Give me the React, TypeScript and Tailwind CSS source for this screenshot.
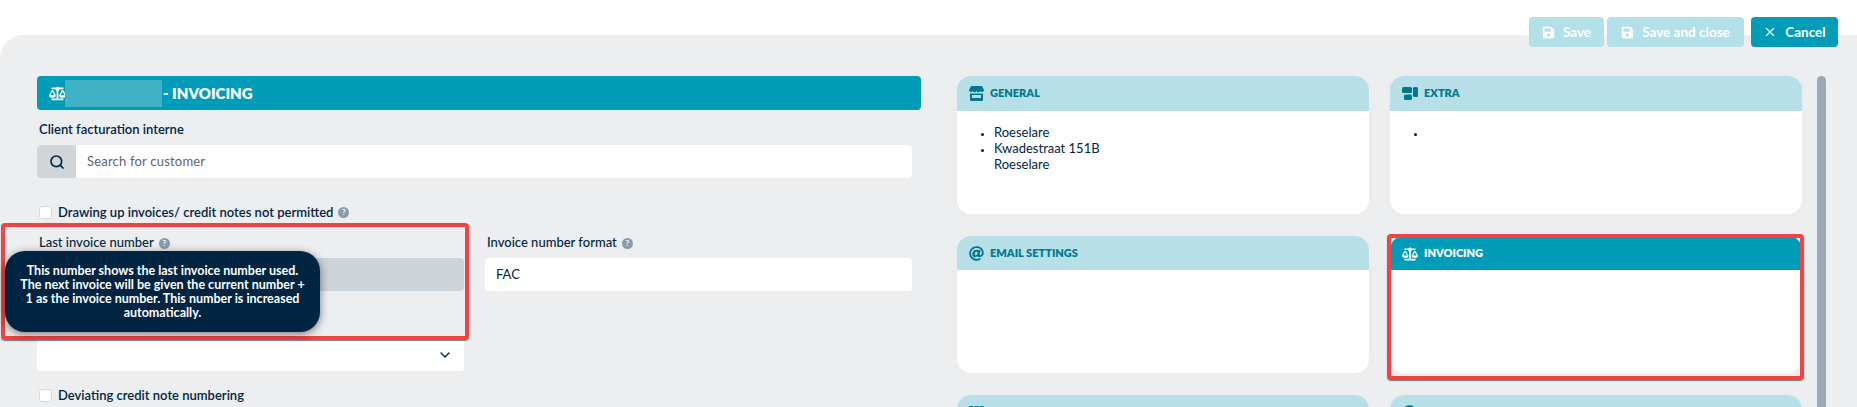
import React from 'react';
import { FaAt, FaBalanceScale, FaQuestionCircle, FaSave, FaTh } from 'react-icons/fa';
import { FiChevronDown, FiSearch, FiX } from 'react-icons/fi';

const font = 'font-["Lato","Liberation_Sans",sans-serif]';

const StoreIcon = () => (
    <svg width="15" height="15" viewBox="0 0 15 15" fill="currentColor">
        <path d="M2 0h11l2 4a2 2 0 0 1-3.750 1 2 2 0 0 1-3.750 0 2 2 0 0 1-3.750 0A2 2 0 0 1 0 4z" />
        <path d="M1 7.500h13V14a1 1 0 0 1-1 1H2a1 1 0 0 1-1-1zM3 9v3h9V9z" fillRule="evenodd" />
    </svg>
);

const BlocksIcon = () => (
    <svg width="16" height="13" viewBox="0 0 16 13" fill="currentColor">
        <rect x="0" y="0" width="10" height="6" rx="1.5" />
        <rect x="11" y="0" width="5" height="10" rx="1.5" />
        <rect x="2" y="7.500" width="8" height="5.500" rx="1.5" />
    </svg>
);

const HelpDot = () => (
    <span className="ml-[5px] inline-flex h-[11px] w-[11px] items-center justify-center rounded-full bg-[#8a9aa8] text-[8px] font-bold leading-none text-white">?</span>
);

const Checkbox = () => (
    <span className="h-[13px] w-[13px] shrink-0 rounded-[3px] border border-[#d5d8dc] bg-white" />
);

const Card = ({ title, icon, active, heightClass, headClass, children }: {
    title: string;
    icon: React.ReactNode;
    active?: boolean;
    heightClass: string;
    headClass: string;
    children?: React.ReactNode;
}) => (
    <div className={`flex flex-col overflow-hidden rounded-[14px] bg-white shadow-[0_0_14px_rgba(0,0,0,0.02)] ${heightClass}`}>
        <div className={`flex shrink-0 items-center gap-[6px] pl-3 text-[11px] font-extrabold uppercase ${headClass} ${active ? 'bg-[#019db8] text-white' : 'bg-[#b7dfe7] text-[#01788f]'}`}>
            {icon}
            <span>{title}</span>
        </div>
        {children}
    </div>
);

const ActionButton = ({ label, icon, enabled, widthClass }: { label: string; icon: React.ReactNode; enabled?: boolean; widthClass: string }) => (
    <button className={`flex h-[30px] items-center justify-center gap-[8px] rounded-[4px] text-[13.500px] font-bold text-white ${widthClass} ${enabled ? 'bg-[#019db8]' : 'bg-[#b2e1e9]'}`}>
        {icon}
        {label}
    </button>
);

const App: React.FC = () => {
    return (
        <div className={`flex h-[407px] w-[1857px] flex-col overflow-hidden bg-white text-[#002542] ${font}`}>
            {/* Toolbar hangs over the top of the grey panel */}
            <div className="relative z-10 flex h-[35px] shrink-0 items-start justify-end gap-[3px] pr-[19px] pt-[17px]">
                <ActionButton label="Save" icon={<FaSave size={13} />} widthClass="w-[75px]" />
                <ActionButton label="Save and close" icon={<FaSave size={13} />} widthClass="w-[137px]" />
                <span className="w-px" />
                <ActionButton label="Cancel" icon={<FiX size={14} />} enabled widthClass="w-[87px]" />
            </div>

            <div className="relative flex min-h-0 flex-1 rounded-tl-[24px] bg-[#edeef0] pl-[37px] pt-[41px]">
                {/* Left form */}
                <div className="w-[884px] shrink-0">
                    <div className="flex h-[34px] items-center rounded-[4px] bg-[#019db8] pl-3 text-[15px] font-extrabold text-white">
                        <FaBalanceScale size={17} className="shrink-0" />
                        <span className="ml-[-1px] mr-[1px] h-[27px] w-[97px] bg-[#40b2c6]" />
                        <span>- INVOICING</span>
                    </div>

                    <div className="w-[875px]">
                        <div className="mt-[11px] pl-[2px] text-[13px] font-semibold leading-[16px]">Client facturation interne</div>
                        <div className="mt-[8px] flex h-[33px] overflow-hidden rounded-[4px] bg-white">
                            <span className="flex w-[39px] items-center justify-center bg-[#d0d5d9]"><FiSearch size={16} strokeWidth={2.500} /></span>
                            <span className="flex items-center pl-[11px] text-[13px] tracking-[0.2px] text-[#5c6470]">Search for customer</span>
                        </div>

                        <div className="mt-[27px] flex items-center gap-[6px] pl-[2px] text-[13px] font-semibold leading-[14px]">
                            <Checkbox />
                            <span className="flex items-center">Drawing up invoices/ credit notes not permitted<HelpDot /></span>
                        </div>

                        <div className="mt-[16px] grid grid-cols-[427px_427px] gap-x-[21px]">
                            <div>
                                <div className="flex h-[16px] items-center pl-[2px] text-[13px] font-medium">Last invoice number<HelpDot /></div>
                                <div className="mt-[7px] h-[33px] rounded-[4px] bg-[#ccd3d9]" />
                                <div className="mt-[47px] flex h-[33px] items-center justify-end rounded-[4px] bg-white pr-[11px]"><FiChevronDown size={16} /></div>
                            </div>
                            <div>
                                <div className="flex h-[16px] items-center pl-[2px] text-[13px] font-medium">Invoice number format<HelpDot /></div>
                                <div className="mt-[7px] flex h-[33px] items-center rounded-[4px] bg-white pl-[11px] text-[13px]">FAC</div>
                            </div>
                        </div>

                        <div className="mt-[17px] flex items-center gap-[6px] pl-[2px] text-[13px] font-semibold leading-[14px]">
                            <Checkbox />
                            <span>Deviating credit note numbering</span>
                        </div>
                    </div>
                </div>

                {/* Right cards */}
                <div className="ml-[36px] grid grid-cols-[412px_412px] content-start gap-x-[21px]">
                    <Card title="General" icon={<StoreIcon />} heightClass="h-[138px]" headClass="h-[35px]">
                        <ul className="list-disc pl-[37px] pt-[13px] text-[13px] leading-[16px] marker:text-[10px]">
                            <li>Roeselare</li>
                            <li>Kwadestraat 151B<br />Roeselare</li>
                        </ul>
                    </Card>
                    <Card title="Extra" icon={<BlocksIcon />} heightClass="h-[138px]" headClass="h-[35px]">
                        <ul className="list-disc pl-[37px] pt-[13px] text-[13px] leading-[16px] marker:text-[10px]">
                            <li>&nbsp;</li>
                        </ul>
                    </Card>
                    <div className="mt-[22px]">
                        <Card title="Email settings" icon={<FaAt size={15} />} heightClass="h-[137px]" headClass="h-[34px]" />
                    </div>
                    <div className="relative mt-[22px]">
                        <Card title="Invoicing" icon={<FaBalanceScale size={16} />} active heightClass="h-[137px]" headClass="h-[34px] border-t border-[#01788f]" />
                        <div className="absolute -bottom-[7px] -left-[3px] -right-[2px] -top-[2px] rounded-[4px] border-[4px] border-[#f04444] shadow-[0_1px_1px_rgba(0,0,0,0.5)]" />
                    </div>
                    <div className="mt-[22px]">
                        <Card title="" icon={<FaTh size={15} />} heightClass="h-[137px]" headClass="h-[34px]" />
                    </div>
                    <div className="mt-[22px]">
                        <Card title="" icon={<FaQuestionCircle size={15} />} heightClass="h-[137px]" headClass="h-[34px]" />
                    </div>
                </div>

                {/* Scrollbar */}
                <div className="ml-[15px] h-[400px] w-[9px] rounded-t-[5px] bg-[#9ca8b3]" />

                {/* Red annotation and help tooltip over the form */}
                <div className="absolute left-[1px] top-[188px] h-[117px] w-[468px] rounded-[4px] border-[4px] border-[#f04444] shadow-[0_1px_1px_rgba(0,0,0,0.5)]" />
                <div className="absolute left-[5px] top-[216px] flex h-[81px] w-[315px] items-center justify-center rounded-[20px] bg-[#002542] px-[12px] text-center text-[12.500px] font-bold leading-[14px] text-white shadow-[0_2px_8px_rgba(0,0,0,0.5)]">
                    This number shows the last invoice number used. The next invoice will be given the current number + 1 as the invoice number. This number is increased automatically.
                </div>
            </div>
        </div>
    );
};

export default App;
